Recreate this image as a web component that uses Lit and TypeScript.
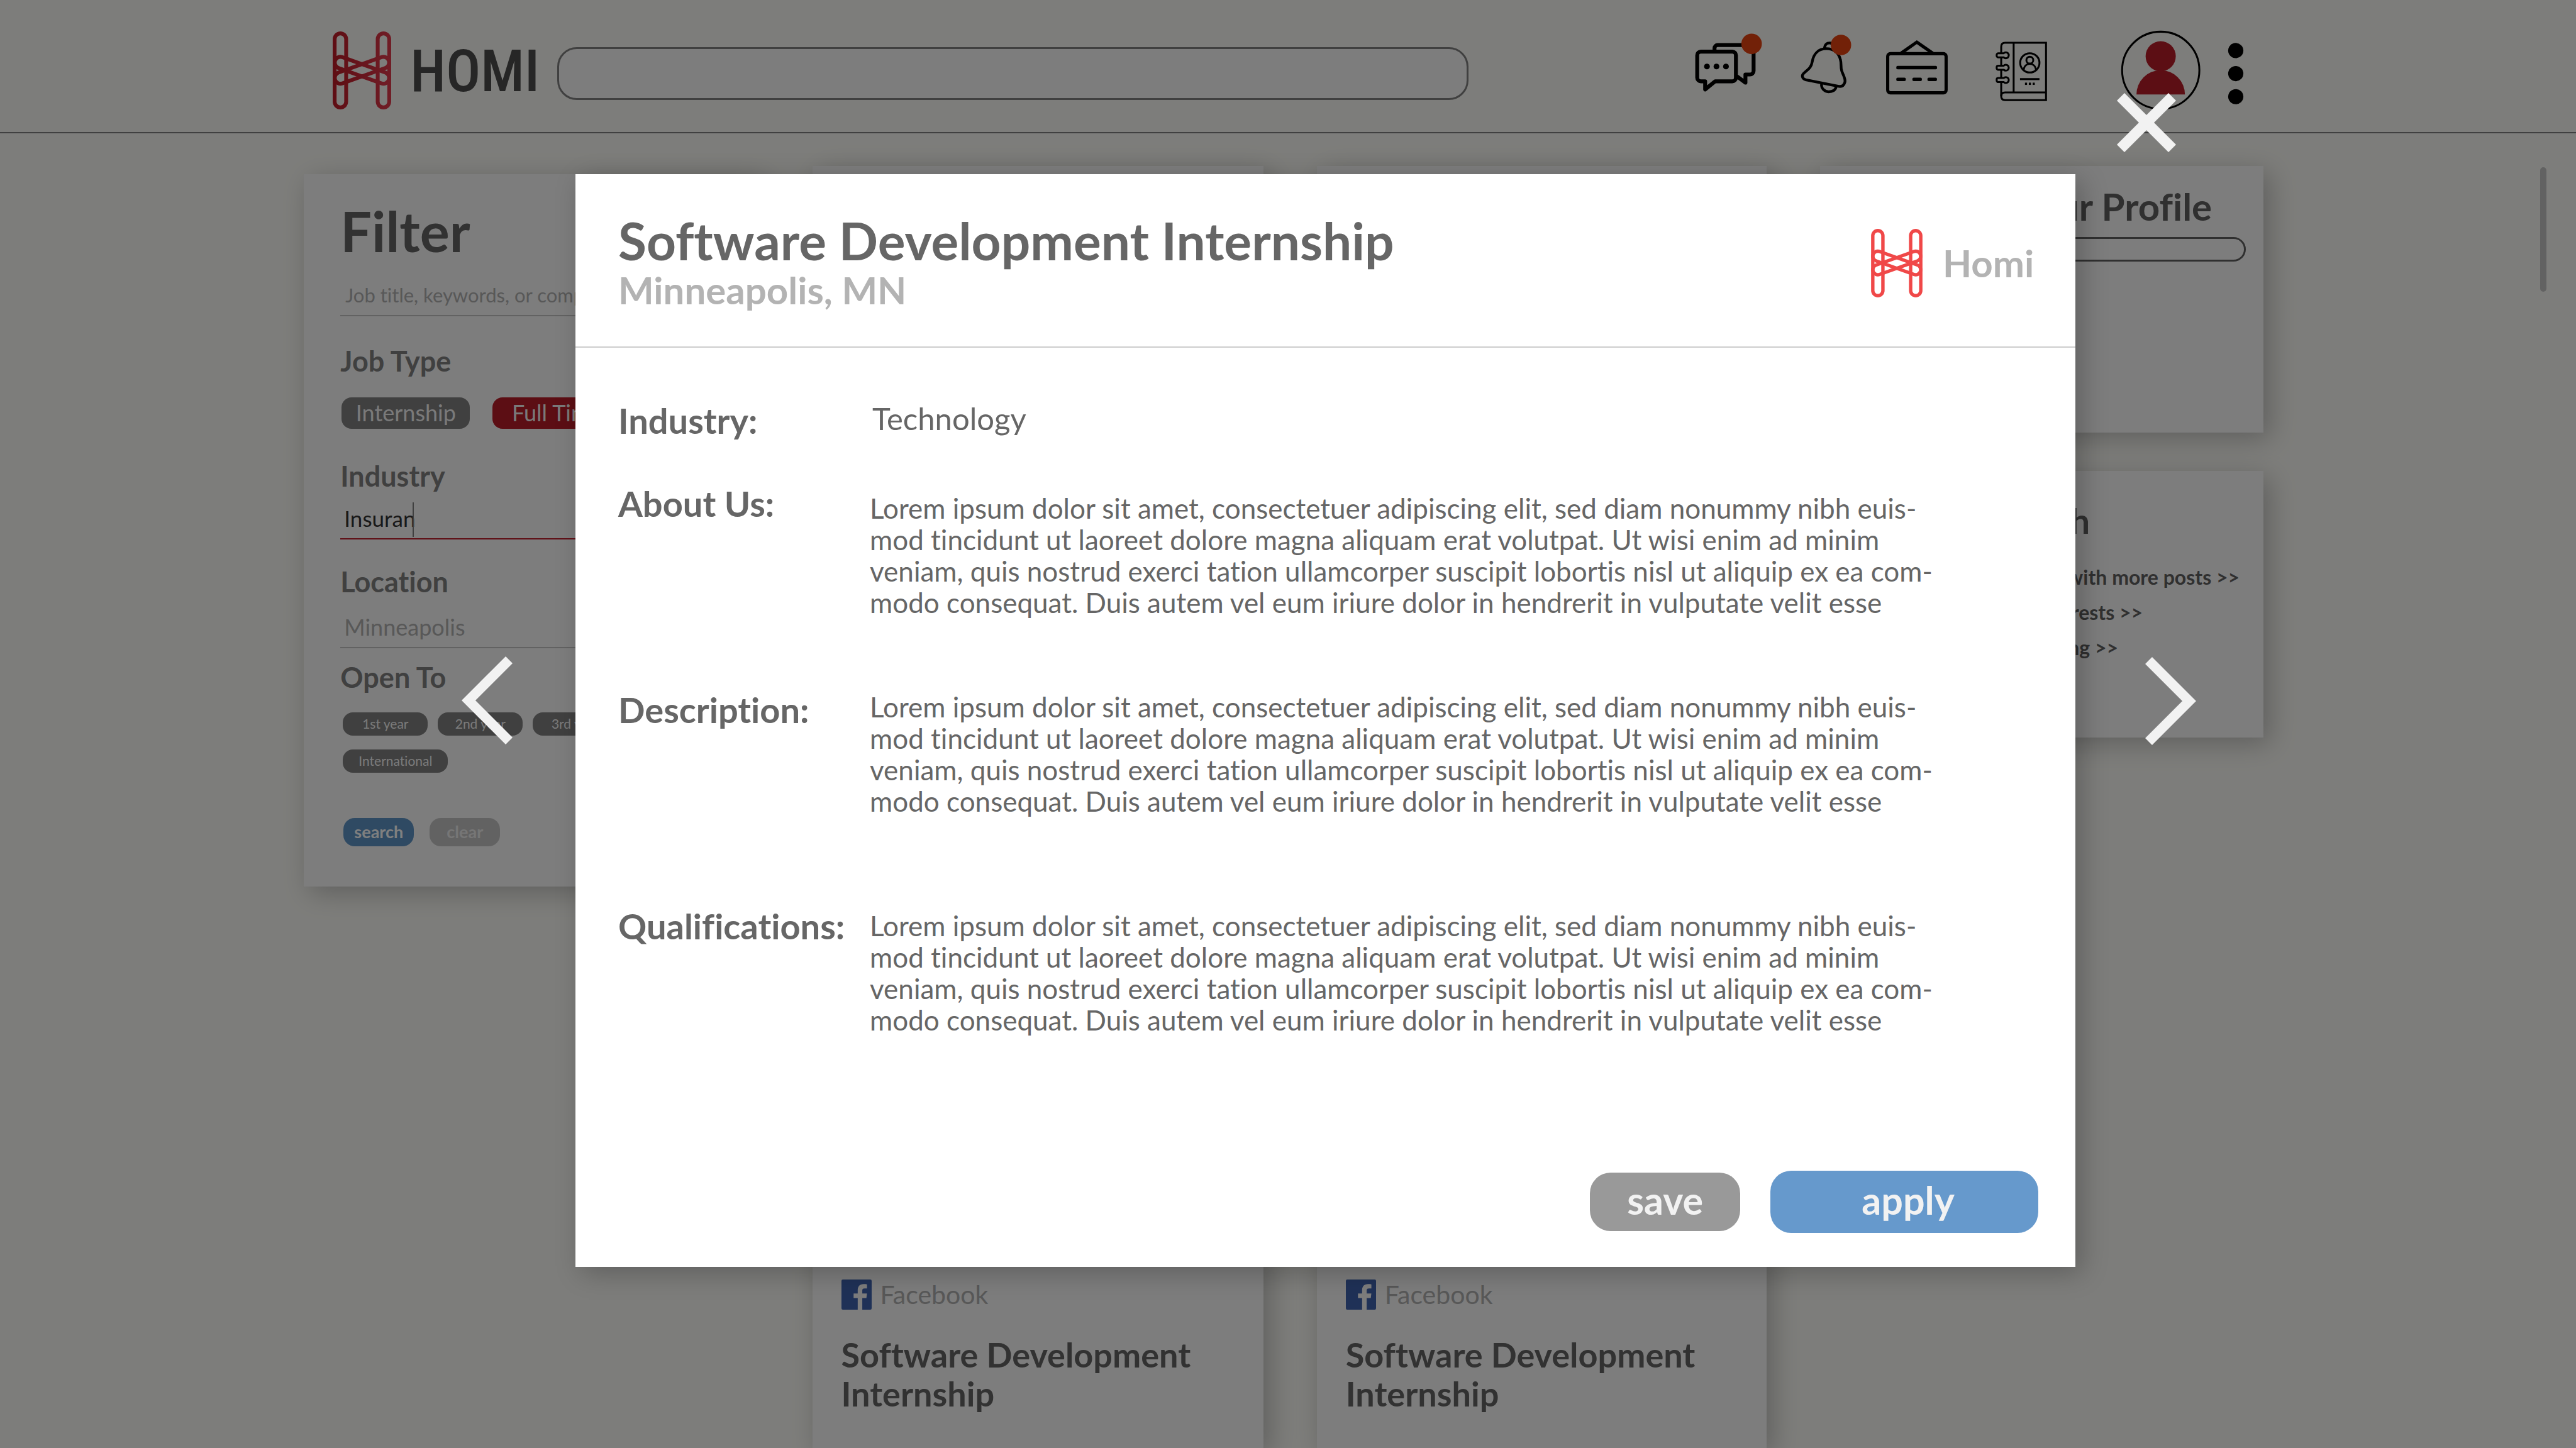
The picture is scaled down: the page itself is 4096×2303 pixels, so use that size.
import { LitElement, html, svg, css } from "lit";
import { customElement, property } from "lit/decorators.js";

@customElement("homi-mark")
class HomiMark extends LitElement {
  @property() from = "#f04848";
  @property() to = "#f04848";

  static styles = css`
    :host { display: block; }
    svg { display: block; width: 100%; height: 100%; }
  `;

  render() {
    return html`<svg viewBox="0 0 129 172" fill="none" stroke="url(#g)" stroke-width="8.5" aria-hidden="true">
      <defs>
        <linearGradient id="g" gradientUnits="userSpaceOnUse" x1="0" y1="0" x2="129" y2="0">
          <stop offset="0" stop-color=${this.from}></stop>
          <stop offset="1" stop-color=${this.to}></stop>
        </linearGradient>
      </defs>
      <rect x="4.3" y="4.3" width="25.4" height="163.4" rx="12.7"></rect>
      <rect x="99.3" y="4.3" width="25.4" height="163.4" rx="12.7"></rect>
      <rect x="1.5" y="73" width="126" height="25.2" rx="12.6" transform="rotate(19.7 64.5 85.6)"></rect>
      <rect x="1.5" y="73" width="126" height="25.2" rx="12.6" transform="rotate(-19.7 64.5 85.6)"></rect>
    </svg>`;
  }
}

const badge = (cx: number, cy: number) => svg`<circle cx=${cx} cy=${cy} r="22.6" fill="#e44210" stroke="none"></circle>`;

const chatIcon = html`<svg viewBox="0 10 150 200" fill="none" stroke="#000" stroke-width="8.6" stroke-linejoin="round" aria-hidden="true">
  <path d="M44.7 67V61a7 7 0 0 1 7-7H123a8 8 0 0 1 8 8v49a8 8 0 0 1-8 8h-10v18L94 123"></path>
  <path d="M14.5 68.5H84a8 8 0 0 1 8 8V126a8 8 0 0 1-8 8H46L24 152V134h-9.5a8 8 0 0 1-8-8V76.5a8 8 0 0 1 8-8z"></path>
  <g fill="#000" stroke="none">
    <circle cx="28" cy="101.3" r="6.4"></circle><circle cx="49" cy="101.3" r="6.4"></circle><circle cx="70" cy="101.3" r="6.4"></circle>
  </g>
  ${badge(126.6, 51.3)}
</svg>`;

const bellIcon = html`<svg viewBox="0 10 133 200" fill="none" stroke="#000" stroke-width="6" stroke-linejoin="round" aria-hidden="true">
  <path d="M71 62C71 53 76 48.5 84 49.5L92 54"></path>
  <path d="M64.5 139C63 150 71 157 80 157.2C89 157.2 96 153 96.5 146"></path>
  <path d="M75 62C57 62 47 74 44 90C42 102 37 106 31 111C24 117 20 120 23 126C25 130 27 130 31 131L101 145C110 147 114 143 116 136C118 128 112 121 109 111C106 102 109 96 106 86C102 71 92 62 75 62Z"></path>
  ${badge(107.3, 53.6)}
</svg>`;

const signIcon = html`<svg viewBox="0 10 150 200" fill="none" stroke="#000" stroke-width="7" aria-hidden="true">
  <path d="M40 72L74.8 47.5L110 72"></path>
  <rect x="10.5" y="73" width="129" height="86.5" rx="6"></rect>
  <g fill="#000" stroke="none">
    <rect x="29.5" y="100" width="90" height="7.7" rx="3"></rect>
    <rect x="29.5" y="126" width="21" height="7.7" rx="3"></rect>
    <rect x="65" y="126" width="21" height="7.7" rx="3"></rect>
    <rect x="98.3" y="126" width="21" height="7.7" rx="3"></rect>
  </g>
</svg>`;

const bookIcon = html`<svg viewBox="0 10 150 200" fill="none" stroke="#000" stroke-width="4.2" aria-hidden="true">
  <path d="M143.5 49H53q-8.5 0-8.5 9V167q0 8.5 8.5 8.5h90.5Z"></path>
  <path d="M44.5 167q0-8.3 8.5-8.3h90.5M72 49V158"></path>
  ${[76.7, 104, 131.3].map(
    (y) => svg`<path fill="#fbfbf6" d="M50 ${y - 4.5}H38a3.5 3.5 0 0 0-3.5 3.5v2a3.5 3.5 0 0 0 3.5 3.5H50a6.5 6.5 0 1 0 0-9z"></path>`
  )}
  <circle cx="107.7" cy="93.3" r="21.3"></circle>
  <circle cx="107.7" cy="87.3" r="7.6"></circle>
  <path d="M94 109.5C95 100 101 95.5 107.7 95.5S120.5 100 121.5 109.5"></path>
  <g fill="#000" stroke="none">
    <rect x="86" y="127" width="43" height="4.4"></rect>
    <rect x="97" y="137" width="4.6" height="5"></rect>
    <rect x="105.5" y="137" width="4.6" height="5"></rect>
    <rect x="114" y="137" width="4.6" height="5"></rect>
  </g>
</svg>`;

const avatarIcon = html`<svg viewBox="0 10 200 200" aria-hidden="true">
  <circle cx="99.6" cy="109.7" r="85.3" fill="none" stroke="#000" stroke-width="4.2"></circle>
  <g fill="#b81c28"><circle cx="99.5" cy="78.8" r="33.3"></circle><path d="M46 163a53.5 53.5 0 0 1 107 0z"></path></g>
</svg>`;

const dotsIcon = html`<svg viewBox="0 10 50 200" aria-hidden="true">
  <circle cx="25" cy="66.2" r="16.8"></circle><circle cx="25" cy="117" r="16.8"></circle><circle cx="25" cy="168" r="16.8"></circle>
</svg>`;

const facebookIcon = html`<svg class="fb" viewBox="0 0 66 66" aria-hidden="true">
  <path fill="#3e62ae" fill-rule="evenodd" d="M3 0H63a3 3 0 0 1 3 3V63a3 3 0 0 1-3 3H45.5V40.5H54.5L55.7 30.5H45.5V24.5C45.5 21 46.5 19.5 50.5 19.5H55.8V10.5C54 10.2 51.5 10 48.5 10C40 10 35.5 15 35.5 23.5V30.5H26.5V40.5H35.5V66H3a3 3 0 0 1-3-3V3a3 3 0 0 1 3-3z"></path>
</svg>`;

const LOREM = [
  "Lorem ipsum dolor sit amet, consectetuer adipiscing elit, sed diam nonummy nibh euis-",
  "mod tincidunt ut laoreet dolore magna aliquam erat volutpat. Ut wisi enim ad minim",
  "veniam, quis nostrud exerci tation ullamcorper suscipit lobortis nisl ut aliquip ex ea com-",
  "modo consequat. Duis autem vel eum iriure dolor in hendrerit in vulputate velit esse",
];

@customElement("job-column")
class JobColumn extends LitElement {
  static styles = css`
    :host { display: flex; flex-direction: column; gap: 84px; }
    .card { background: #fafafa; box-shadow: 10px 10px 40px rgba(0, 0, 0, 0.24); }
    .blank { flex: 1; }
    .job { padding: 60px 46px 55px; color: #646464; }
    .company { display: flex; align-items: center; gap: 14px; font-size: 41px; line-height: 48px; color: #b0b0b0; }
    .fb { width: 48px; height: 48px; }
    h3 { margin: 41px 0 0; font-size: 54px; line-height: 62px; font-weight: 700; }
  `;

  render() {
    return html`
      <div class="card blank"></div>
      <article class="card job">
        <div class="company">${facebookIcon}<span>Facebook</span></div>
        <h3>Software Development Internship</h3>
      </article>
    `;
  }
}

@customElement("filter-panel")
class FilterPanel extends LitElement {
  static styles = css`
    :host {
      display: block;
      padding: 38px 0 64px 58px;
      background: #fafafa;
      box-shadow: 10px 10px 40px rgba(0, 0, 0, 0.24);
      color: #808080;
    }
    h2 { margin: 0; font-size: 88px; line-height: 104px; color: #646464; }
    h3, .name { display: block; margin: 0; font-size: 45px; line-height: 54px; font-weight: 700; }
    .field { position: relative; margin-right: 60px; border-bottom: 2px solid #c4c4c4; }
    .field.active { border-color: #be1e2d; }
    input {
      display: block;
      box-sizing: border-box;
      width: 100%;
      height: 65px;
      padding: 0 6px;
      border: 0;
      outline: 0;
      background: none;
      font: inherit;
      font-size: 36px;
      color: #333;
    }
    input::placeholder { color: #b0b0b0; opacity: 1; }
    .keywords { margin-top: 17px; margin-bottom: 44px; }
    .keywords input { font-size: 31px; padding: 0 8px; }
    .industry { margin-top: 7px; margin-bottom: 40px; }
    .industry input { font-size: 35px; }
    .location { margin-top: 12px; margin-bottom: 19px; }
    .caret { position: absolute; left: 115px; top: 8px; width: 2px; height: 55px; background: #808080; }
    .chips { display: flex; flex-wrap: wrap; padding: 0 60px 0 2px; }
    button { border: 0; font: inherit; color: #f4f4f4; background: #808080; }
    .types { gap: 36px; margin: 31px 0 48px; }
    .types button { height: 50px; min-width: 204px; padding: 0 20px 2px; border-radius: 16px; font-size: 36px; }
    .types .on { padding: 0 30px 2px; background: #b81c28; }
    .years { gap: 22px 16px; margin: 29px 0 72px; padding-left: 4px; }
    .years button { height: 37px; min-width: 135px; padding: 0 25px 2px; border-radius: 16px; font-size: 21px; }
    .actions { display: flex; gap: 25px; padding-left: 5px; }
    .actions button { width: 112px; height: 45px; padding: 0 0 3px; border-radius: 18px; font-size: 27px; font-weight: 700; }
    .actions .search { background: #5e94c6; color: #fff; }
    .actions .clear { background: #c4c4c4; color: #ececec; }
  `;

  render() {
    return html`
      <h2>Filter</h2>
      <div class="field keywords"><input aria-label="Keywords" placeholder="Job title, keywords, or company" /></div>
      <h3>Job Type</h3>
      <div class="chips types"><button>Internship</button><button class="on">Full Time</button></div>
      <label class="name" for="industry">Industry</label>
      <div class="field active industry"><input id="industry" .value=${"Insuran"} /><span class="caret"></span></div>
      <label class="name" for="location">Location</label>
      <div class="field location"><input id="location" placeholder="Minneapolis" /></div>
      <h3>Open To</h3>
      <div class="chips years">
        ${["1st year", "2nd year", "3rd year", "International"].map((t) => html`<button>${t}</button>`)}
      </div>
      <div class="actions"><button class="search">search</button><button class="clear">clear</button></div>
    `;
  }
}

@customElement("job-dialog")
class JobDialog extends LitElement {
  static styles = css`
    :host {
      display: flex;
      flex-direction: column;
      background: #fff;
      color: #666;
      box-shadow: 10px 10px 40px rgba(0, 0, 0, 0.24);
    }
    header { display: flex; justify-content: space-between; padding: 62px 66px 54px 68px; border-bottom: 2px solid #ccc; }
    h1 { margin: 0; font-size: 82px; line-height: 86px; }
    .place { font-size: 60px; line-height: 72px; font-weight: 700; color: #b3b3b3; }
    .company { display: flex; align-items: center; gap: 32px; align-self: center; font-size: 60px; font-weight: 700; color: #b3b3b3; }
    .company homi-mark { width: 82px; height: 109px; }
    dl { flex: 1; margin: 0; padding: 82px 60px 0 68px; }
    .row { display: grid; grid-template-columns: 400px 1fr; }
    dt { font-size: 56px; line-height: 68px; font-weight: 700; white-space: nowrap; }
    dd { margin: 0; font-size: 44px; line-height: 50px; white-space: nowrap; }
    dd p { margin: 0; }
    .industry { margin-bottom: 64px; }
    .industry dd { padding-left: 4px; font-size: 49px; line-height: 60px; }
    .about { margin-bottom: 112px; }
    .about dd { padding-top: 16px; }
    .description { margin-bottom: 140px; }
    .description dd { padding-top: 4px; }
    .qualifications dd { padding-top: 8px; }
    footer { display: flex; justify-content: flex-end; align-items: center; gap: 48px; padding: 0 59px 54px; }
    button { height: 93px; width: 239px; padding: 0 0 6px; border: 0; border-radius: 33px; font: inherit; font-size: 61px; font-weight: 700; color: #f2f2f2; background: #999; }
    .apply { width: 426px; height: 99px; padding-left: 12px; background: #69c; }
  `;

  render() {
    const text = LOREM.map((line) => html`<p>${line}</p>`);
    return html`
      <header>
        <div>
          <h1>Software Development Internship</h1>
          <div class="place">Minneapolis, MN</div>
        </div>
        <div class="company"><homi-mark></homi-mark><span>Homi</span></div>
      </header>
      <dl>
        <div class="row industry"><dt>Industry:</dt><dd>Technology</dd></div>
        <div class="row about"><dt>About Us:</dt><dd>${text}</dd></div>
        <div class="row description"><dt>Description:</dt><dd>${text}</dd></div>
        <div class="row qualifications"><dt>Qualifications:</dt><dd>${text}</dd></div>
      </dl>
      <footer><button>save</button><button class="apply">apply</button></footer>
    `;
  }
}

@customElement("app-root")
class AppRoot extends LitElement {
  static styles = css`
    :host { display: block; font-family: Lato, "Open Sans", sans-serif; font-variant-ligatures: none; }
    .page { position: relative; display: flex; flex-direction: column; height: 100vh; overflow: hidden; background: #fbfbf6; }
    .bar {
      display: flex;
      align-items: center;
      box-sizing: border-box;
      height: 212px;
      padding: 14px 12.77% 0 12.92%;
      border-bottom: 2px solid #808080;
    }
    .brand { display: flex; align-items: center; gap: 30px; width: 357px; text-decoration: none; }
    .brand homi-mark { width: 93px; height: 124px; }
    .brand span { padding-top: 4px; font-family: "Roboto Condensed", Roboto, sans-serif; font-size: 92px; line-height: 120px; font-weight: 500; color: #4d4d4d; }
    .query {
      flex: 1;
      min-width: 0;
      box-sizing: border-box;
      height: 84px;
      margin: 10px 11.8% 0 0;
      padding: 0 30px;
      border: 3px solid #808080;
      border-radius: 31px;
      background: #fafafa;
      font: inherit;
      font-size: 40px;
    }
    nav { display: flex; }
    nav button { padding: 0; border: 0; background: none; }
    nav svg { display: block; height: 144px; }
    .tools { display: flex; gap: 48px; margin-right: 106px; }
    .account { display: flex; gap: 29px; }
    main {
      flex: 1;
      min-height: 0;
      display: grid;
      grid-template-columns: 723fr 717fr 715fr 705fr;
      column-gap: 85px;
      padding: 52px 12.13% 0 11.8%;
    }
    filter-panel { align-self: start; margin-top: 13px; }
    .side { display: flex; flex-direction: column; gap: 61px; }
    .panel { box-sizing: border-box; min-height: 424px; padding: 28px; background: #fafafa; box-shadow: 10px 10px 40px rgba(0, 0, 0, 0.24); color: #606060; text-align: right; }
    .panel h2 { margin: 0; font-size: 60px; line-height: 72px; white-space: nowrap; }
    .profile h2 { padding-right: 54px; }
    .meter { box-sizing: border-box; height: 39px; margin-top: 13px; border: 3px solid #606060; border-radius: 20px; }
    .explore { padding-top: 43px; }
    .explore h2 { padding-right: 248px; font-size: 56px; }
    .explore a { display: block; color: inherit; font-size: 32px; line-height: 56px; font-weight: 700; text-decoration: none; }
    .explore .posts { margin-top: 26px; padding-right: 10px; }
    .explore .interests { padding-right: 164px; }
    .explore .hiring { padding-right: 203px; }
    .scroll { position: absolute; right: 47px; top: 266px; width: 10px; height: 198px; border-radius: 6px; background: #c4c4c4; }
    .overlay { position: absolute; inset: 0; padding: 277px 19.43% 288px 22.34%; background: rgba(0, 0, 0, 0.5); display: flex; }
    job-dialog { flex: 1; min-width: 0; }
    .overlay button { position: absolute; padding: 0; border: 0; background: none; }
    .overlay svg { display: block; width: 100%; height: 100%; fill: none; stroke: #f2f2f2; stroke-width: 17; }
    .close { left: 82.17%; top: 148px; width: 94px; height: 94px; }
    .prev { left: 17.91%; top: 1044px; width: 81px; height: 140px; }
    .next { left: 83.28%; top: 1045px; width: 81px; height: 140px; }
  `;

  render() {
    return html`
      <div class="page">
        <header class="bar">
          <a class="brand" href="#"><homi-mark from="#be1c28" to="#e03a4c"></homi-mark><span>HOMI</span></a>
          <input class="query" type="search" aria-label="Search" />
          <nav>
            <div class="tools">
              <button aria-label="Messages">${chatIcon}</button>
              <button aria-label="Notifications">${bellIcon}</button>
              <button aria-label="Postings">${signIcon}</button>
              <button aria-label="Contacts">${bookIcon}</button>
            </div>
            <div class="account">
              <button aria-label="Account">${avatarIcon}</button>
              <button aria-label="More">${dotsIcon}</button>
            </div>
          </nav>
        </header>
        <main>
          <filter-panel></filter-panel>
          <job-column></job-column>
          <job-column></job-column>
          <div class="side">
            <section class="panel profile"><h2>Your Profile</h2><div class="meter"></div></section>
            <section class="panel explore">
              <h2>Search</h2>
              <a class="posts" href="#">Companies with more posts &gt;&gt;</a>
              <a class="interests" href="#">Your interests &gt;&gt;</a>
              <a class="hiring" href="#">Now hiring &gt;&gt;</a>
            </section>
          </div>
        </main>
        <div class="scroll"></div>
        <div class="overlay">
          <job-dialog role="dialog" aria-label="Software Development Internship"></job-dialog>
          <button class="close" aria-label="Close"><svg viewBox="0 0 94 94"><path d="M6 6L88 88M88 6L6 88"></path></svg></button>
          <button class="prev" aria-label="Previous"><svg viewBox="0 0 81 140"><path stroke-width="15.5" d="M75.5 5.5L11 70L75.5 134.5"></path></svg></button>
          <button class="next" aria-label="Next"><svg viewBox="0 0 81 140"><path stroke-width="15.5" d="M5.5 5.5L70 70L5.5 134.5"></path></svg></button>
        </div>
      </div>
    `;
  }
}
